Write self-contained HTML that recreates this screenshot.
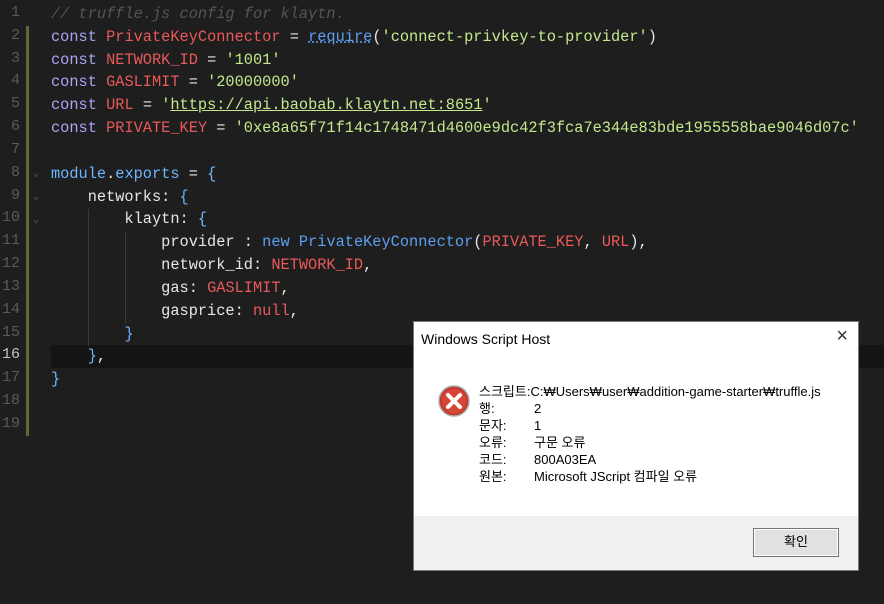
<!DOCTYPE html>
<html><head><meta charset="utf-8"><style>
html,body{margin:0;padding:0;}
body{width:884px;height:604px;background:#1e1e1e;position:relative;overflow:hidden;font-family:"Liberation Mono",monospace;}
.ln{position:absolute;left:0;width:20px;text-align:right;color:#5a5a5a;font-size:15px;}
.code{position:absolute;left:51px;white-space:pre;font-size:15.3px;color:#e6e6e6;}
.k{color:#a9a4f5}.v{color:#ea5959}.s{color:#c3e88d}.b{color:#5d9ff0}.c{color:#555;font-style:italic}.p{color:#6cb6ff}
.dlg{position:absolute;left:413px;top:321px;width:446px;height:250px;background:#fff;border:1px solid #777;box-sizing:border-box;font-family:"Liberation Sans","Noto Sans CJK KR",sans-serif;color:#000;}
</style></head><body>
<div style="position:absolute;left:26px;top:26px;width:3px;height:410px;background:#5a6b3a"></div>
<div style="position:absolute;left:51px;top:345px;width:833px;height:23px;background:#141414"></div>
<div style="position:absolute;left:88px;top:209px;width:1px;height:137px;background:#3a3a3a"></div>
<div style="position:absolute;left:125px;top:232px;width:1px;height:92px;background:#3a3a3a"></div>
<div id="g"></div>
<script>
var lines=[
'<span class="c">// truffle.js config for klaytn.</span>',
'<span class="k">const</span> <span class="v">PrivateKeyConnector</span> = <span class="b" style="text-decoration:underline dotted">require</span>(<span class="s">\'connect-privkey-to-provider\'</span>)',
'<span class="k">const</span> <span class="v">NETWORK_ID</span> = <span class="s">\'1001\'</span>',
'<span class="k">const</span> <span class="v">GASLIMIT</span> = <span class="s">\'20000000\'</span>',
'<span class="k">const</span> <span class="v">URL</span> = <span class="s">\'<u>https://api.baobab.klaytn.net:8651</u>\'</span>',
'<span class="k">const</span> <span class="v">PRIVATE_KEY</span> = <span class="s">\'0xe8a65f71f14c1748471d4600e9dc42f3fca7e344e83bde1955558bae9046d07c\'</span>',
'',
'<span class="p">module</span>.<span class="p">exports</span> = <span class="p">{</span>',
'    networks: <span class="p">{</span>',
'        klaytn: <span class="p">{</span>',
'            provider : <span class="b">new</span> <span class="b">PrivateKeyConnector</span>(<span class="v">PRIVATE_KEY</span>, <span class="v">URL</span>),',
'            network_id: <span class="v">NETWORK_ID</span>,',
'            gas: <span class="v">GASLIMIT</span>,',
'            gasprice: <span class="v">null</span>,',
'        <span class="p">}</span>',
'    <span class="p">}</span>,',
'<span class="p">}</span>','',''];
var h='';
for(var i=0;i<19;i++){var t=3+i*22.83;
h+='<div class="ln" style="top:'+(t+1)+'px;'+(i==15?'color:#c6c6c6':'')+'">'+(i+1)+'</div>';
h+='<div class="code" style="top:'+t+'px;line-height:22px">'+lines[i]+'</div>';}
h+='<div style="position:absolute;left:33px;top:166px;color:#555;font-size:11px">&#8964;</div><div style="position:absolute;left:33px;top:189px;color:#555;font-size:11px">&#8964;</div><div style="position:absolute;left:33px;top:212px;color:#555;font-size:11px">&#8964;</div>';
document.getElementById('g').innerHTML=h;
</script>
<div class="dlg">
<div style="position:absolute;left:7px;top:9px;font-size:14px">Windows Script Host</div>
<div style="position:absolute;right:10px;top:3px;font-size:20px;font-weight:100;color:#333">×</div>
<svg style="position:absolute;left:24px;top:63px" width="32" height="32" viewBox="0 0 32 32"><circle cx="16" cy="16" r="15" fill="#c0392b" stroke="#aaa" stroke-width="1.5"/><circle cx="16" cy="16" r="12.5" fill="#d64535"/><path d="M10 10L22 22M22 10L10 22" stroke="#fff" stroke-width="4" stroke-linecap="round"/></svg>
<div style="position:absolute;left:65px;top:61px;font-size:13px;line-height:17px">
<div>스크립트:C:₩Users₩user₩addition-game-starter₩truffle.js</div>
<div>행:<span style="position:absolute;left:55px">2</span></div>
<div>문자:<span style="position:absolute;left:55px">1</span></div>
<div>오류:<span style="position:absolute;left:55px">구문 오류</span></div>
<div>코드:<span style="position:absolute;left:55px">800A03EA</span></div>
<div>원본:<span style="position:absolute;left:55px">Microsoft JScript 컴파일 오류</span></div>
</div>
<div style="position:absolute;left:0;right:0;top:194px;bottom:0;background:#f0f0f0"></div>
<div style="position:absolute;left:339px;top:206px;width:86px;height:29px;border:1px solid #777;background:#e1e1e1;box-sizing:border-box;text-align:center;line-height:26px;font-size:13px;box-shadow:inset 0 0 0 1px #fff">확인</div>
</div>
</body></html>
